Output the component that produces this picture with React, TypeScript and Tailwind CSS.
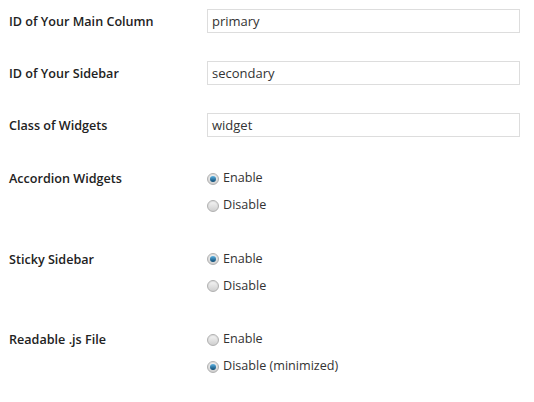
import React from "react";

function Radio({ checked, label }: { checked?: boolean; label: string }) {
  return (
    <label className="flex h-[27px] items-center gap-[4px] text-[12.6px] text-[#333]">
      <span className="flex h-[12px] w-[12px] items-center justify-center rounded-full border border-[#b0b0b0] bg-gradient-to-b from-[#f6f6f6] to-[#cfcfcf] shadow-[inset_0_1px_1px_rgba(0,0,0,0.1)]">
        {checked && (
          <span className="h-[6px] w-[6px] rounded-full bg-gradient-to-b from-[#5cb3e3] to-[#0a4a73]" />
        )}
      </span>
      <span>{label}</span>
    </label>
  );
}

function TextRow({ label, value }: { label: string; value: string }) {
  return (
    <div className="flex h-[52px] pt-[9px]">
      <div className="w-[198px] pt-[4px] text-[12.6px] font-semibold text-[#222]">{label}</div>
      <div className="h-[24px] w-[313px] border border-[#dddddd] bg-white px-[4px] text-[13px] leading-[22px] text-[#333]">
        {value}
      </div>
    </div>
  );
}

function RadioRow({
  label,
  options,
}: {
  label: string;
  options: { label: string; checked?: boolean }[];
}) {
  return (
    <div className="flex pb-[26.5px]">
      <div className="w-[198px] pt-[5px] text-[12.6px] font-semibold leading-[18px] text-[#222]">{label}</div>
      <div className="flex flex-col">
        {options.map((o) => (
          <Radio key={o.label} label={o.label} checked={o.checked} />
        ))}
      </div>
    </div>
  );
}

export default function App() {
  return (
    <div
      className="h-[402px] w-[534px] bg-white pl-[9px]"
      style={{ fontFamily: '"Open Sans", sans-serif' }}
    >
      <TextRow label="ID of Your Main Column" value="primary" />
      <TextRow label="ID of Your Sidebar" value="secondary" />
      <TextRow label="Class of Widgets" value="widget" />
      <div className="pt-[9px]">
        <RadioRow
          label="Accordion Widgets"
          options={[{ label: "Enable", checked: true }, { label: "Disable" }]}
        />
        <RadioRow
          label="Sticky Sidebar"
          options={[{ label: "Enable", checked: true }, { label: "Disable" }]}
        />
        <RadioRow
          label="Readable .js File"
          options={[{ label: "Enable" }, { label: "Disable (minimized)", checked: true }]}
        />
      </div>
    </div>
  );
}
